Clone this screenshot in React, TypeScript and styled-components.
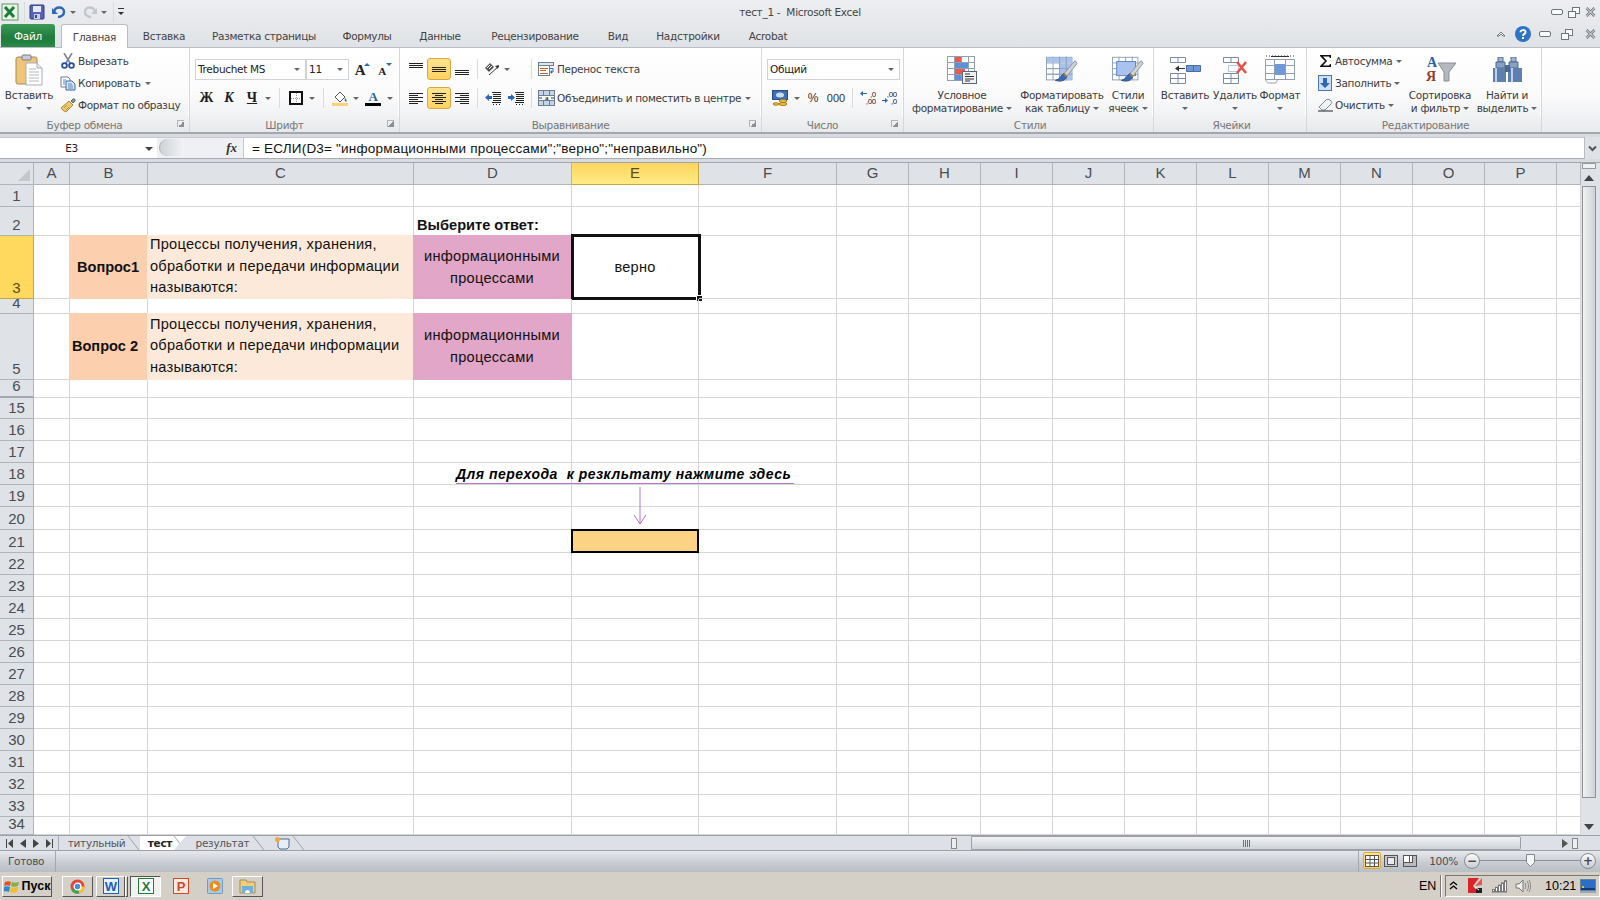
import React from "react";
import styled, { createGlobalStyle } from "styled-components";

const uiFont = `"DejaVu Sans", "Liberation Sans", sans-serif`;
const cellFont = `"Liberation Sans", Arial, sans-serif`;

const GlobalStyle = createGlobalStyle`
  html, body {
    margin: 0;
    padding: 0;
    width: 1600px;
    height: 900px;
    overflow: hidden;
    background: #e3e6ea;
  }
  svg { display: block; }
`;

const Window = styled.div`
  width: 1600px;
  height: 900px;
  display: flex;
  flex-direction: column;
  font-family: ${uiFont};
  font-size: 10.5px;
  letter-spacing: -0.3px;
  color: #3c3c3c;
`;

/* ---------- title bar ---------- */

const TitleBar = styled.div`
  height: 24px;
  display: grid;
  grid-template-columns: 1fr auto 1fr;
  align-items: center;
  background: linear-gradient(#eceef1, #e6e8eb);
`;

const Qat = styled.div`
  display: flex;
  align-items: center;
  padding-left: 1px;
`;

const Slot = styled.span<{ $w: number }>`
  width: ${(p) => p.$w}px;
  flex: none;
  display: flex;
  align-items: center;
  justify-content: center;
`;

const TitleText = styled.div`
  font-size: 10.5px;
  color: #444;
  white-space: pre;
`;

const WinButtons = styled.div`
  display: flex;
  justify-content: flex-end;
  align-items: center;
  gap: 5px;
  padding-right: 4px;
`;

/* ---------- tabs ---------- */

const TabStrip = styled.div`
  height: 23px;
  display: flex;
  align-items: flex-end;
  background: linear-gradient(#e6e8eb, #dfe2e6);
  padding-left: 1px;
  position: relative;
`;

const FileTab = styled.div`
  width: 54px;
  height: 23px;
  margin-right: 6px;
  border-radius: 3px 3px 0 0;
  background: linear-gradient(#3c9a58, #1f7b3c 60%, #2a8a47);
  color: #fff;
  display: flex;
  align-items: center;
  justify-content: center;
`;

const RibbonTab = styled.div<{ $w: number; $active?: boolean }>`
  width: ${(p) => p.$w}px;
  height: ${(p) => (p.$active ? 24 : 23)}px;
  flex: none;
  box-sizing: border-box;
  display: flex;
  align-items: center;
  justify-content: center;
  white-space: nowrap;
  color: #444;
  margin-bottom: ${(p) => (p.$active ? -1 : 0)}px;
  background: ${(p) => (p.$active ? "#fff" : "transparent")};
  border: ${(p) => (p.$active ? "1px solid #babec4" : "none")};
  border-bottom: none;
  border-radius: 3px 3px 0 0;
  position: relative;
  z-index: 1;
`;

const HelpCluster = styled.div`
  position: absolute;
  right: 2px;
  top: 2px;
  display: flex;
  align-items: center;
`;

/* ---------- ribbon ---------- */

const Ribbon = styled.div`
  height: 87px;
  box-sizing: border-box;
  display: flex;
  background: linear-gradient(#ffffff, #fbfbfc 55%, #e9ebee);
  border-top: 1px solid #babec4;
  border-bottom: 2px solid #a4a8ae;
`;

const Group = styled.div<{ $w: number }>`
  width: ${(p) => p.$w}px;
  flex: none;
  box-sizing: border-box;
  display: flex;
  flex-direction: column;
  border-right: 1px solid #d4d7db;
  box-shadow: inset -1px 0 0 #fff;
`;

const GroupBody = styled.div<{ $pl?: number; $column?: boolean; $pt?: number; $gap?: number }>`
  flex: 1;
  display: flex;
  flex-direction: ${(p) => (p.$column ? "column" : "row")};
  padding-left: ${(p) => p.$pl ?? 0}px;
  padding-top: ${(p) => p.$pt ?? 3}px;
  gap: ${(p) => p.$gap ?? 0}px;
`;

const GroupLabel = styled.div<{ $launcher?: boolean }>`
  height: 15px;
  flex: none;
  box-sizing: border-box;
  position: relative;
  display: flex;
  align-items: center;
  justify-content: center;
  color: #777;
  padding: ${(p) => (p.$launcher ? "0 20px 0 0" : "0 0 0 3px")};
  background: linear-gradient(#eff1f3, #e7e9ec);
`;

const Launcher = styled.span`
  position: absolute;
  right: 5px;
  top: 3px;
  width: 6px;
  height: 6px;
  border-left: 1px solid #b0b4b9;
  border-top: 1px solid #b0b4b9;
  background: linear-gradient(135deg, transparent 50%, #8b9097 50%);
`;

const LargeButton = styled.div<{ $w: number }>`
  width: ${(p) => p.$w}px;
  flex: none;
  display: flex;
  flex-direction: column;
  align-items: center;
`;

const LargeIcon = styled.div`
  height: 38px;
  display: flex;
  align-items: center;
  justify-content: center;
`;

const LargeText = styled.div`
  line-height: 13px;
  text-align: center;
  white-space: nowrap;
  display: flex;
  flex-direction: column;
  align-items: center;
`;

const TextLine = styled.span`
  display: flex;
  align-items: center;
  height: 13px;
  gap: 3px;
`;

const Caret = styled.i`
  display: inline-block;
  width: 0;
  height: 0;
  border-left: 3px solid transparent;
  border-right: 3px solid transparent;
  border-top: 3px solid #666;
`;

const SmallStack = styled.div<{ $w: number; $ml?: number }>`
  width: ${(p) => p.$w}px;
  margin-left: ${(p) => p.$ml ?? 0}px;
  margin-top: -1px;
  flex: none;
  display: flex;
  flex-direction: column;
`;

const SmallRow = styled.div`
  height: 22px;
  display: flex;
  align-items: center;
  white-space: nowrap;
`;

const Tools = styled.div`
  height: 22px;
  display: flex;
  align-items: center;
  white-space: nowrap;
`;

const Combo = styled.div<{ $w: number }>`
  width: ${(p) => p.$w}px;
  height: 21px;
  flex: none;
  box-sizing: border-box;
  border: 1px solid #d0d3d7;
  background: #fff;
  display: flex;
  align-items: center;
  justify-content: space-between;
  padding: 0 5px 0 2px;
  color: #222;
`;

const Hot = styled.span`
  width: 24px;
  height: 22px;
  flex: none;
  box-sizing: border-box;
  border: 1px solid #d9a73f;
  border-radius: 3px;
  background: linear-gradient(#ffe48f, #ffd263);
  display: flex;
  align-items: center;
  justify-content: center;
`;

const Sep = styled.span`
  width: 1px;
  height: 20px;
  background: #d9dbde;
`;

const Glyph = styled.span<{ $italic?: boolean; $underline?: boolean }>`
  font-family: "Liberation Serif", serif;
  font-weight: bold;
  font-size: 14px;
  letter-spacing: 0;
  color: #1c1c1c;
  font-style: ${(p) => (p.$italic ? "italic" : "normal")};
  text-decoration: ${(p) => (p.$underline ? "underline" : "none")};
`;

const NumGlyph = styled.span<{ $size: number }>`
  font-family: ${cellFont};
  font-size: ${(p) => p.$size}px;
  letter-spacing: 0;
  color: #333;
`;

/* ---------- formula bar ---------- */

const FormulaStrip = styled.div`
  height: 29px;
  box-sizing: border-box;
  background: #d8dbe0;
  padding: 3px 0;
  border-bottom: 1px solid #a2a6ac;
  display: flex;
`;

const NameBox = styled.div`
  width: 157px;
  flex: none;
  box-sizing: border-box;
  background: #fff;
  display: flex;
  align-items: center;
  position: relative;
  border-bottom: 1px solid #a9adb3;
  border-top: 1px solid #c6c9ce;
  justify-content: center;
  padding-right: 14px;
  color: #222;
`;

const NameCaret = styled.i`
  position: absolute;
  right: 4px;
  top: 9px;
  border-left: 4px solid transparent;
  border-right: 4px solid transparent;
  border-top: 4px solid #444;
`;

const FxZone = styled.div`
  width: 86px;
  flex: none;
  box-sizing: border-box;
  background: #eef0f3;
  border-bottom: 1px solid #a9adb3;
  border-top: 1px solid #c6c9ce;
  display: flex;
  align-items: center;
  justify-content: flex-end;
  padding-right: 6px;
  position: relative;
`;

const Grip = styled.span`
  position: absolute;
  left: 2px;
  top: 1px;
  width: 24px;
  height: 17px;
  border-radius: 10px 0 0 10px;
  background: linear-gradient(90deg, #cfd2d6, #f2f3f5);
  border-left: 1px solid #aeb1b6;
`;

const FxMark = styled.span`
  font-family: "Liberation Serif", serif;
  font-style: italic;
  font-weight: bold;
  font-size: 13px;
  letter-spacing: 0;
  color: #333;
`;

const FormulaInput = styled.div`
  flex: 1;
  box-sizing: border-box;
  background: #fff;
  border-left: 1px solid #c6c9ce;
  border-top: 1px solid #c6c9ce;
  border-bottom: 1px solid #a9adb3;
  padding-left: 8px;
  display: flex;
  align-items: center;
  font-family: ${cellFont};
  font-size: 13.5px;
  letter-spacing: 0.2px;
  color: #111;
  white-space: pre;
`;

const ExpandButton = styled.div`
  width: 15px;
  flex: none;
  background: #dfe2e6;
  border-left: 1px solid #b8bbc0;
  display: flex;
  align-items: center;
  justify-content: center;
`;

/* ---------- sheet ---------- */

const SheetRow = styled.div`
  height: 672px;
  display: flex;
`;

const SheetWrap = styled.div`
  position: relative;
  width: 1581px;
  flex: none;
  overflow: hidden;
  background: #fff;
`;

const Grid = styled.div<{ $cols: string; $rows: string }>`
  display: grid;
  grid-template-columns: ${(p) => p.$cols};
  grid-template-rows: ${(p) => p.$rows};
  font-family: ${cellFont};
  font-size: 14.6px;
  letter-spacing: 0.25px;
  color: #111;
`;

const Corner = styled.div`
  background: #dfe3e8;
  border-right: 1px solid #b1b5ba;
  border-bottom: 1px solid #b1b5ba;
  box-sizing: border-box;
  display: flex;
  align-items: flex-end;
  justify-content: flex-end;
  padding: 0 3px 3px 0;
`;

const CornerMark = styled.i`
  border-left: 12px solid transparent;
  border-bottom: 12px solid #c4c8cd;
`;

const ColHead = styled.div<{ $on?: boolean }>`
  box-sizing: border-box;
  display: flex;
  align-items: center;
  justify-content: center;
  padding-bottom: 2px;
  font-size: 15px;
  letter-spacing: 0;
  color: ${(p) => (p.$on ? "#5b4a1c" : "#4a4d52")};
  background: ${(p) => (p.$on ? "linear-gradient(#ffd55e, #ffeb85)" : "#dfe3e8")};
  border-right: 1px solid ${(p) => (p.$on ? "#c9a53f" : "#b1b5ba")};
  border-bottom: 1px solid ${(p) => (p.$on ? "#c9a53f" : "#b1b5ba")};
`;

const RowHead = styled.div<{ $on?: boolean; $hiddenNext?: boolean }>`
  box-sizing: border-box;
  display: flex;
  align-items: flex-end;
  justify-content: center;
  overflow: hidden;
  padding-bottom: 1px;
  line-height: 18px;
  font-size: 15px;
  letter-spacing: 0;
  color: ${(p) => (p.$on ? "#5b4a1c" : "#4a4d52")};
  background: ${(p) => (p.$on ? "#ffd95e" : "#dfe3e8")};
  border-right: 1px solid ${(p) => (p.$on ? "#c9a53f" : "#b1b5ba")};
  border-bottom: ${(p) => (p.$hiddenNext ? "2px solid #a4a8ae" : `1px solid ${p.$on ? "#c9a53f" : "#b1b5ba"}`)};
`;

const Cell = styled.div<{
  $fill?: string;
  $bold?: boolean;
  $center?: boolean;
  $bottom?: boolean;
  $boxed?: boolean;
  $pr?: number;
}>`
  box-sizing: border-box;
  position: relative;
  display: flex;
  flex-direction: column;
  justify-content: ${(p) => (p.$bottom ? "flex-end" : "center")};
  align-items: ${(p) => (p.$center ? "center" : "flex-start")};
  text-align: ${(p) => (p.$center ? "center" : "left")};
  padding: ${(p) => (p.$center ? 2 : 0)}px ${(p) => p.$pr ?? 0}px 0 ${(p) => (p.$center ? 0 : 3)}px;
  line-height: ${(p) => (p.$bottom ? 19 : 21.6)}px;
  white-space: nowrap;
  font-weight: ${(p) => (p.$bold ? "bold" : "normal")};
  letter-spacing: ${(p) => (p.$bold ? 0 : 0.25)}px;
  background: ${(p) => p.$fill ?? "transparent"};
  border-right: 1px solid ${(p) => (p.$fill ? "transparent" : "#d6d6d6")};
  border-bottom: 1px solid ${(p) => (p.$fill ? "transparent" : "#d6d6d6")};
  ${(p) => p.$fill && "margin: -1px 0 0 -1px;"}
  ${(p) => p.$boxed && "outline: 2px solid #000; outline-offset: -2px; z-index: 1;"}
`;

const SelectionFrame = styled.span`
  position: absolute;
  top: -2px;
  left: -1px;
  right: -3px;
  bottom: -2px;
  border: 3px solid #111;
  box-sizing: border-box;
  pointer-events: none;
`;

const FillHandle = styled.span`
  position: absolute;
  right: -5px;
  bottom: -4px;
  width: 7px;
  height: 7px;
  box-sizing: border-box;
  background: #111;
  border: 1px solid #fff;
`;

const FloatingNote = styled.div`
  position: absolute;
  left: 456px;
  top: 302px;
  width: 338px;
  height: 19px;
  box-sizing: border-box;
  border-bottom: 1px solid #b477cc;
  font-family: ${cellFont};
  font-weight: bold;
  font-style: italic;
  font-size: 14px;
  letter-spacing: 0.5px;
  color: #000;
  white-space: pre;
  line-height: 18px;
`;

const FloatingArrow = styled.svg`
  position: absolute;
  left: 633px;
  top: 324px;
`;

const VScroll = styled.div`
  flex: 1;
  display: flex;
  flex-direction: column;
  align-items: flex-start;
  background: #dfe3e8;
`;

const SplitBox = styled.div`
  width: 14px;
  height: 6px;
  margin: 0 0 0 1px;
  border: 1px solid #999;
  background: #f0f1f3;
  box-sizing: border-box;
`;

const VArrow = styled.div`
  width: 14px;
  height: 17px;
  margin-left: 1px;
  display: flex;
  align-items: center;
  justify-content: center;
`;

const VTrack = styled.div`
  flex: 1;
  width: 14px;
  margin-left: 1px;
`;

const VThumb = styled.div`
  height: 612px;
  box-sizing: border-box;
  border: 1px solid #8f9399;
  background: linear-gradient(90deg, #f1f3f5, #cdd1d7);
`;

/* ---------- sheet tabs ---------- */

const BottomBar = styled.div`
  height: 16px;
  box-sizing: border-box;
  display: flex;
  background: #dde1e7;
  border-top: 1px solid #9ca1a8;
  border-bottom: 1px solid #9ca1a8;
  align-items: stretch;
  overflow: hidden;
`;

const NavArrows = styled.div`
  width: 59px;
  flex: none;
  display: flex;
  align-items: center;
  border-right: 1px solid #a8acb2;
  padding-left: 2px;
  box-sizing: border-box;
`;

const SheetTab = styled.div<{ $w: number; $active?: boolean }>`
  width: ${(p) => p.$w}px;
  flex: none;
  position: relative;
  display: flex;
  align-items: center;
  justify-content: center;
  color: ${(p) => (p.$active ? "#222" : "#555")};
  font-weight: ${(p) => (p.$active ? "bold" : "normal")};
  background: ${(p) => (p.$active ? "#fff" : "transparent")};
  ${(p) => p.$active && "clip-path: polygon(0 0, 100% 0, calc(100% - 12px) 100%, 0 100%);"}
  padding-right: 6px;
  box-sizing: border-box;
  &::after {
    content: "";
    position: absolute;
    right: 6px;
    top: -2px;
    bottom: -2px;
    width: 1px;
    background: #a0a4aa;
    transform: skewX(38deg);
  }
`;

const TabSpacer = styled.div`
  flex: 1;
`;

const HScroll = styled.div`
  width: 630px;
  flex: none;
  display: flex;
  align-items: center;
`;

const SplitterBar = styled.span`
  width: 6px;
  height: 11px;
  margin: 0 4px 0 0;
  flex: none;
  border: 1px solid #888;
  background: #eceef0;
  box-sizing: border-box;
`;

const HThumb = styled.div`
  width: 550px;
  height: 14px;
  flex: none;
  margin-left: 10px;
  box-sizing: border-box;
  border: 1px solid #9da1a7;
  border-radius: 0 2px 2px 0;
  background: linear-gradient(#f0f2f4, #cfd3d9);
  display: flex;
  align-items: center;
  justify-content: center;
`;

const GripLines = styled.span`
  width: 7px;
  height: 7px;
  background: repeating-linear-gradient(90deg, #6d7176 0 1px, transparent 1px 2px);
`;

/* ---------- status bar ---------- */

const StatusBar = styled.div`
  height: 21px;
  flex: none;
  display: flex;
  align-items: center;
  justify-content: space-between;
  background: linear-gradient(#e6e8ec, #c9ccd2 55%, #b9bdc4);
  color: #4d4d4d;
`;

const StatusText = styled.div`
  width: 56px;
  height: 100%;
  box-sizing: border-box;
  padding: 0 0 2px 8px;
  display: flex;
  align-items: center;
  border-right: 1px solid #a5a9af;
`;

const StatusRight = styled.div`
  display: flex;
  align-items: center;
  height: 100%;
  width: 242px;
  box-sizing: border-box;
  border-left: 1px solid #a5a9af;
  padding: 0 0 2px 4px;
`;

const ViewBtn = styled.span<{ $on?: boolean }>`
  width: 18px;
  height: 17px;
  flex: none;
  box-sizing: border-box;
  display: flex;
  align-items: center;
  justify-content: center;
  border-radius: 2px;
  margin-right: 1px;
  ${(p) => p.$on && "background: linear-gradient(#ffe48f, #ffd263); border: 1px solid #d9a73f;"}
`;

const Zoom = styled.span`
  width: 38px;
  text-align: right;
  margin-right: 6px;
  flex: none;
`;

const ZoomCircle = styled.span`
  width: 16px;
  height: 16px;
  flex: none;
  box-sizing: border-box;
  border: 1px solid #888c92;
  border-radius: 50%;
  background: linear-gradient(#fbfbfc, #c8ccd1);
  display: flex;
  align-items: center;
  justify-content: center;
  color: #444;
  font-weight: bold;
  font-size: 12px;
  line-height: 1;
`;

const SliderTrack = styled.span`
  width: 100px;
  height: 1px;
  flex: none;
  background: #8e9298;
  position: relative;
`;

const SliderThumb = styled.span`
  position: absolute;
  left: 46px;
  top: -6px;
`;

/* ---------- taskbar ---------- */

const Taskbar = styled.div`
  flex: 1;
  display: flex;
  align-items: center;
  background: #d4d0c8;
  color: #000;
  font-family: "Liberation Sans", sans-serif;
  font-size: 13px;
  letter-spacing: 0;
  padding-left: 2px;
`;

const TaskButton = styled.div<{ $w: number; $ml?: number; $pressed?: boolean; $flat?: boolean }>`
  width: ${(p) => p.$w}px;
  height: 21px;
  margin-left: ${(p) => p.$ml ?? 0}px;
  flex: none;
  box-sizing: border-box;
  display: flex;
  align-items: center;
  justify-content: center;
  gap: 2px;
  ${(p) =>
    p.$flat
      ? ""
      : p.$pressed
      ? "background: #f4f2ee; border: 1px solid; border-color: #555 #fff #fff #555;"
      : "border: 1px solid; border-color: #fff #555 #555 #fff;"}
`;

const StartLabel = styled.span`
  font-weight: bold;
  font-size: 12.5px;
`;

const TaskSpacer = styled.div`
  flex: 1;
`;

const LangLabel = styled.div`
  width: 21px;
  flex: none;
  font-size: 12.5px;
`;

const TaskDivider = styled.span`
  width: 0;
  height: 22px;
  margin: 0 3px 0 0;
  border-left: 1px solid #777;
  border-right: 1px solid #fff;
`;

const Tray = styled.div`
  width: 155px;
  height: 22px;
  flex: none;
  box-sizing: border-box;
  display: flex;
  align-items: center;
  border: 1px solid;
  border-color: #777 #fff #fff #777;
`;

const Clock = styled.span`
  font-size: 12.5px;
  width: 33px;
  margin-left: 7px;
  flex: none;
`;

/* ---------- icons ---------- */

const ExcelLogo = () => (
  <svg width="18" height="18" viewBox="0 0 18 18">
    <rect x="1" y="1" width="16" height="16" fill="#eaf3e6" stroke="#5f9a68" />
    <path d="M4 4l9 10M13 4L4 14" stroke="#1f7b3c" strokeWidth="3" />
  </svg>
);

const SaveIcon = () => (
  <svg width="16" height="16" viewBox="0 0 16 16">
    <rect x="1" y="1" width="14" height="14" rx="1" fill="#5a62b8" stroke="#2f3a86" />
    <rect x="4" y="2" width="8" height="6" fill="#e6ecf6" />
    <rect x="5" y="10" width="6" height="5" fill="#ccd0dc" />
    <rect x="6" y="11" width="2" height="3" fill="#3a438f" />
  </svg>
);

const UndoIcon = ({ c }: { c: string }) => (
  <svg width="14" height="14" viewBox="0 0 14 14">
    <path d="M2 7 C3 1 12 1 12 7 C12 10 9 12 6 12" fill="none" stroke={c} strokeWidth="2.4" />
    <path d="M0 3v6h6z" fill={c} />
  </svg>
);

const RedoIcon = ({ c }: { c: string }) => (
  <svg width="14" height="14" viewBox="0 0 14 14">
    <path d="M12 7 C11 1 2 1 2 7 C2 10 5 12 8 12" fill="none" stroke={c} strokeWidth="2.4" />
    <path d="M14 3v6H8z" fill={c} />
  </svg>
);

const CustomizeIcon = () => (
  <svg width="8" height="10" viewBox="0 0 8 10">
    <rect x="1" y="1" width="6" height="1" fill="#333" />
    <path d="M1 5h6L4 8z" fill="#333" />
  </svg>
);

const MinGlyph = () => (
  <svg width="12" height="7" viewBox="0 0 12 7">
    <rect x="0.5" y="0.5" width="11" height="5" rx="1.5" fill="#fafbfc" stroke="#70757c" />
  </svg>
);

const RestoreGlyph = () => (
  <svg width="12" height="11" viewBox="0 0 12 11">
    <rect x="4.5" y="0.5" width="7" height="6" fill="#fafbfc" stroke="#70757c" />
    <rect x="0.5" y="4.5" width="7" height="6" fill="#fafbfc" stroke="#70757c" />
  </svg>
);

const CloseGlyph = () => (
  <svg width="11" height="10" viewBox="0 0 11 10">
    <path d="M1.5 1l8 8M9.5 1l-8 8" stroke="#70757c" strokeWidth="2.6" />
    <path d="M1.5 1l8 8M9.5 1l-8 8" stroke="#f3f4f6" strokeWidth="1" />
  </svg>
);

const HelpIcon = () => (
  <svg width="16" height="16" viewBox="0 0 16 16">
    <circle cx="8" cy="8" r="8" fill="#2f73c7" />
    <path d="M5.5 6.2C5.6 3.4 10.6 3.4 10.6 6c0 2-2.6 1.8-2.6 4" fill="none" stroke="#fff" strokeWidth="1.9" />
    <rect x="7" y="11" width="2" height="2" fill="#fff" />
  </svg>
);

const ChevronUp = () => (
  <svg width="10" height="8" viewBox="0 0 10 8">
    <path d="M1 6l4-4 4 4H7L5 4 3 6z" fill="#fff" stroke="#555" strokeWidth="0.8" />
  </svg>
);

const ChevronDown = () => (
  <svg width="9" height="7" viewBox="0 0 9 7">
    <path d="M1 1.5l3.5 3.5L8 1.5" fill="none" stroke="#555" strokeWidth="2" />
  </svg>
);

const PasteIcon = () => (
  <svg width="28" height="32" viewBox="0 0 28 32">
    <rect x="1" y="3" width="21" height="27" rx="2" fill="#efc579" stroke="#a98a58" />
    <rect x="7" y="1" width="9" height="5" rx="1" fill="#c9cdd2" stroke="#7a7f86" />
    <path d="M11 9h11l5 5v17H11z" fill="#fff" stroke="#a9adb3" />
    <path d="M22 9v5h5" fill="#e6e9ed" stroke="#a9adb3" />
    <path d="M14 15h7M14 18h10M14 21h10M14 24h10M14 27h10" stroke="#b3b8c0" />
  </svg>
);

const CutIcon = () => (
  <svg width="14" height="16" viewBox="0 0 14 16">
    <path d="M3 0l6 10M11 0L5 10" stroke="#7d8693" strokeWidth="1.6" />
    <circle cx="3.5" cy="12.5" r="2.4" fill="none" stroke="#27509b" strokeWidth="1.8" />
    <circle cx="10.5" cy="12.5" r="2.4" fill="none" stroke="#27509b" strokeWidth="1.8" />
  </svg>
);

const CopyIcon = () => (
  <svg width="16" height="15" viewBox="0 0 16 15">
    <path d="M1 1h7l2 2v8H1z" fill="#fff" stroke="#6c7d96" />
    <path d="M6 5h6l3 3v6H6z" fill="#dce8f8" stroke="#3566b0" />
    <path d="M8 8h4M8 10h5M8 12h5M3 4h3M3 6h2M3 8h2" stroke="#3566b0" strokeWidth="0.8" />
  </svg>
);

const BrushIcon = () => (
  <svg width="17" height="16" viewBox="0 0 17 16">
    <path d="M1 11 L9 4 L13 8 L6 15 C4 14 2 13 1 11z" fill="#eec768" stroke="#a78a3d" />
    <path d="M4 11l3-3M6 13l3-3" stroke="#b39445" />
    <path d="M11 4l2-2c1-1 3 1 2 2l-2 2z" fill="#8b94a0" stroke="#5e6670" />
  </svg>
);

const GrowFontIcon = ({ big }: { big?: boolean }) => (
  <svg width="18" height="19" viewBox="0 0 18 19">
    <text x="7" y="15" fontSize={big ? 15 : 11} fontWeight="bold" textAnchor="middle" fill="#222" fontFamily="Liberation Serif">A</text>
    <path d={big ? "M11 6l3-3 3 3z" : "M11 3h6l-3 3z"} fill="#2f66b5" />
  </svg>
);

const WrapIcon = () => (
  <svg width="17" height="15" viewBox="0 0 17 15">
    <rect x="0.5" y="0.5" width="15" height="3" fill="#dfe6ef" stroke="#6f7d90" />
    <rect x="0.5" y="3.5" width="11" height="10" fill="#fff" stroke="#6f7d90" />
    <path d="M2 6.5h8M2 8.5h6M2 11.5h8" stroke="#b5651d" />
    <path d="M12 6.5h3v3.5h-2" fill="none" stroke="#2f66b5" />
    <path d="M14 8v4l-2-2z" fill="#2f66b5" />
  </svg>
);

const MergeIcon = () => (
  <svg width="17" height="16" viewBox="0 0 17 16">
    <rect x="0.5" y="0.5" width="16" height="15" fill="#c5d4e6" stroke="#6f7d90" />
    <rect x="0.5" y="5.5" width="16" height="5" fill="#fff" stroke="#6f7d90" />
    <path d="M1 8h3M13 8h3" stroke="#333" />
    <text x="8.5" y="10" fontSize="7" fontWeight="bold" textAnchor="middle" fill="#333" fontFamily="Liberation Serif">a</text>
    <path d="M5.5 0v5M11.5 0v5M5.5 11v5M11.5 11v5" stroke="#6f7d90" />
  </svg>
);

const AlignLines = ({ rows }: { rows: number[][] }) => (
  <svg width="15" height="13" viewBox="0 0 15 13">
    {rows.map(([a, b, y]) => (
      <rect key={y} x={a} y={y} width={b - a} height="1" fill="#222" />
    ))}
  </svg>
);

const vTop = [[0, 14, 0], [0, 14, 2], [0, 14, 4]];
const vMid = [[0, 14, 4], [0, 14, 6], [0, 14, 8]];
const vBot = [[0, 14, 7], [0, 14, 9], [0, 14, 11]];
const hLeft = [[0, 14, 1], [0, 9, 3], [0, 14, 5], [0, 9, 7], [0, 14, 9], [0, 9, 11]];
const hMid = [[0, 14, 1], [3, 11, 3], [0, 14, 5], [3, 11, 7], [0, 14, 9], [3, 11, 11]];
const hRight = [[0, 14, 1], [5, 14, 3], [0, 14, 5], [5, 14, 7], [0, 14, 9], [5, 14, 11]];

const OrientIcon = () => (
  <svg width="16" height="14" viewBox="0 0 16 14">
    <path d="M1 6l5-5 4 4-5 5z" fill="#555" />
    <path d="M3 6l3-3M5 7l3-3" stroke="#fff" />
    <path d="M5 13L15 4" stroke="#333" />
    <path d="M15 3l-4 1 3 3z" fill="#333" />
  </svg>
);

const IndentIcon = ({ flip }: { flip?: boolean }) => (
  <svg width="16" height="13" viewBox="0 0 16 13">
    <path d="M7 0.5h9M8 2.5h8M8 4.5h8M8 6.5h8M8 8.5h8M7 10.5h9" stroke="#222" />
    <path d="M8 12.5h1M11 12.5h1M14 12.5h1" stroke="#222" />
    <path d={flip ? "M0 4h3V2l4 3.5L3 9V7H0z" : "M7 4H4V2L0 5.5 4 9V7h3z"} fill="#2f66b5" />
  </svg>
);

const CurrencyIcon = () => (
  <svg width="16" height="16" viewBox="0 0 16 16">
    <rect x="0.5" y="0.5" width="15" height="9" fill="#3f6fb8" stroke="#2a4d88" />
    <ellipse cx="8" cy="5" rx="4" ry="2.5" fill="#cbdcf0" />
    <ellipse cx="11" cy="11" rx="4" ry="1.5" fill="#f1c041" stroke="#a67f1d" />
    <ellipse cx="11" cy="14" rx="4" ry="1.5" fill="#f1c041" stroke="#a67f1d" />
    <ellipse cx="4" cy="14" rx="3" ry="1.2" fill="#f1c041" stroke="#a67f1d" />
  </svg>
);

const DecimalIcon = ({ dec }: { dec?: boolean }) => (
  <svg width="16" height="16" viewBox="0 0 16 16">
    <text x="16" y="7" fontSize="8" textAnchor="end" fill="#222" fontFamily="Liberation Sans">{dec ? ",00" : ",0"}</text>
    <text x="16" y="14" fontSize="8" textAnchor="end" fill="#222" fontFamily="Liberation Sans">{dec ? ",0" : ",00"}</text>
    <path d={dec ? "M1 10h3V8l3 2.5L4 13v-2H1z" : "M7 3H3V1L0 3.5 3 6V4h4z"} fill="#2f66b5" />
  </svg>
);

const TableBase = () => (
  <>
    <rect x="0.5" y="0.5" width="27" height="24" fill="#fff" stroke="#8fa0b5" />
    <path d="M7.5 0v25M14.5 0v25M21.5 0v25M0 6.5h28M0 12.5h28M0 18.5h28" stroke="#8fa0b5" />
  </>
);

const CondFormatIcon = () => (
  <svg width="30" height="28" viewBox="0 0 30 28">
    <TableBase />
    <rect x="8" y="1" width="6" height="5" fill="#f0584a" />
    <rect x="8" y="7" width="13" height="5" fill="#5f8fd8" />
    <rect x="8" y="13" width="10" height="5" fill="#f0584a" />
    <rect x="8" y="19" width="6" height="5" fill="#5f8fd8" />
    <rect x="15.5" y="15.5" width="14" height="12" fill="#eef1f5" stroke="#5c6672" />
    <path d="M18 18h5M18 20.5h9M18 23h9M18 25h5" stroke="#333" />
  </svg>
);

const BrushOver = () => (
  <>
    <path d="M31 4L19 18l3 3L33 7z" fill="#cfd3d9" stroke="#8d9299" />
    <path d="M19 18c-3 1-3 5-9 7 6 2 11 0 12-4z" fill="#3a69b8" stroke="#2a4a80" />
    <path d="M19 18l3 3" stroke="#a07d3a" strokeWidth="2" />
  </>
);

const FormatTableIcon = () => (
  <svg width="32" height="28" viewBox="0 0 34 28">
    <TableBase />
    <rect x="1" y="1" width="27" height="5" fill="#a9c3ee" />
    <rect x="15" y="7" width="13" height="17" fill="#a9c3ee" />
    <path d="M14.5 0v25M21.5 0v25M0 12.5h28M0 18.5h28" stroke="#8fa0b5" />
    <BrushOver />
  </svg>
);

const CellStylesIcon = () => (
  <svg width="32" height="28" viewBox="0 0 34 28">
    <TableBase />
    <rect x="5" y="5" width="20" height="15" fill="#a9c3ee" stroke="#5f82c0" />
    <BrushOver />
  </svg>
);

const InsertCellsIcon = () => (
  <svg width="31" height="27" viewBox="0 0 31 27">
    <path d="M0.5 0.5h15v5h-15zM8 0v6" fill="#fff" stroke="#7a8ca3" />
    <path d="M16.5 8.5h14v6h-14zM23.5 8v6" fill="#6f98d8" stroke="#4c6c9f" />
    <path d="M6 11.5h9" stroke="#333" />
    <path d="M9 8.5v6L5 11.5z" fill="#333" />
    <path d="M0.5 16.5h15v10h-15zM8 16v11M0 21.5h16" fill="#fff" stroke="#7a8ca3" />
  </svg>
);

const DeleteCellsIcon = () => (
  <svg width="25" height="27" viewBox="0 0 25 27">
    <path d="M0.5 0.5h15v5h-15zM8 0v6" fill="#fff" stroke="#7a8ca3" />
    <path d="M5.5 8.5h10v6h-10z" fill="#fff" stroke="#6f98d8" strokeDasharray="1 1" />
    <path d="M14 5l9 11M23 5l-9 11" stroke="#ee4a3c" strokeWidth="2.4" />
    <path d="M0.5 16.5h15v10h-15zM8 16v11M0 21.5h16" fill="#fff" stroke="#7a8ca3" />
  </svg>
);

const FormatCellsIcon = () => (
  <svg width="30" height="30" viewBox="0 0 30 30">
    <path d="M1 1h28" stroke="#333" strokeDasharray="1 2" />
    <path d="M6 1.5h18" stroke="#333" />
    <rect x="0.5" y="4.5" width="29" height="20" fill="#fff" stroke="#8fa0b5" />
    <path d="M9.5 4v21M20.5 4v21M0 10.5h30M0 18.5h30" stroke="#8fa0b5" />
    <rect x="10" y="9" width="10" height="11" fill="#6f98d8" />
    <path d="M1 25c0 3 3 3 4 3h5c2 0 2-3 2-3" fill="#fff" stroke="#8fa0b5" />
  </svg>
);

const SigmaIcon = () => (
  <svg width="13" height="12" viewBox="0 0 13 12">
    <path d="M1 0h11v3h-1L10 1.5H4L8 6l-4 4.5h6L11 9h1v3H1V11l5-5-5-5z" fill="#111" />
  </svg>
);

const FillIcon = () => (
  <svg width="14" height="16" viewBox="0 0 14 16">
    <rect x="0.5" y="0.5" width="13" height="15" fill="#cfe0f6" stroke="#4b76b5" />
    <path d="M5 3h4v5h3l-5 5-5-5h3z" fill="#2f66b5" />
  </svg>
);

const EraserIcon = () => (
  <svg width="15" height="14" viewBox="0 0 15 14">
    <path d="M1 9l7-7c1-1 3-1 4 0l1 1c1 1 1 2 0 3l-6 6H4z" fill="#f1f3f6" stroke="#7f8a98" />
    <path d="M0 13h15" stroke="#222" />
  </svg>
);

const SortIcon = () => (
  <svg width="32" height="32" viewBox="0 0 32 32">
    <path d="M14 9h18L25 18v9h-5v-9z" fill="#b5b9bf" stroke="#8b8f95" />
    <text x="8" y="13" fontSize="14" fontWeight="bold" textAnchor="middle" fill="#2c5ea8" fontFamily="Liberation Serif">A</text>
    <text x="7" y="27" fontSize="14" fontWeight="bold" textAnchor="middle" fill="#963a32" fontFamily="Liberation Serif">Я</text>
  </svg>
);

const FindIcon = () => (
  <svg width="29" height="27" viewBox="0 0 29 27">
    <path d="M5 0h5v5H5zM18 0h5v5h-5z" fill="#9eb3d0" stroke="#566f96" />
    <path d="M3 5h9v6H3zM16 5h9v6h-9z" fill="#87a1c6" stroke="#4f688f" />
    <path d="M0 11h13v14H0zM15 11h14v14H15z" fill="#5e7fb0" />
    <path d="M3 11v14M19 11v14" stroke="#bfd0e8" strokeWidth="2" />
    <rect x="12" y="8" width="5" height="7" fill="#4f688f" />
  </svg>
);

const TriLeft = ({ c = "#444" }: { c?: string }) => (
  <svg width="6" height="9" viewBox="0 0 6 9"><path d="M6 0v9L0 4.5z" fill={c} /></svg>
);
const TriRight = ({ c = "#444" }: { c?: string }) => (
  <svg width="6" height="9" viewBox="0 0 6 9"><path d="M0 0v9l6-4.5z" fill={c} /></svg>
);
const FirstIcon = () => (
  <svg width="7" height="9" viewBox="0 0 7 9"><path d="M7 0v9L2 4.5zM0 0h1v9H0z" fill="#444" /></svg>
);
const LastIcon = () => (
  <svg width="7" height="9" viewBox="0 0 7 9"><path d="M0 0v9l5-4.5zM6 0h1v9H6z" fill="#444" /></svg>
);

const NewSheetIcon = () => (
  <svg width="16" height="14" viewBox="0 0 16 14">
    <path d="M4 3h11v8l-2 2H6l-2-2z" fill="#e9eef6" stroke="#4f688f" />
    <circle cx="3.5" cy="3.5" r="2.5" fill="#f3a93a" />
  </svg>
);

const NormalViewIcon = () => (
  <svg width="14" height="12" viewBox="0 0 14 12">
    <rect x="0.5" y="0.5" width="13" height="11" fill="#fff" stroke="#555" />
    <path d="M5 0v12M9.5 0v12M0 4.5h14M0 8h14" stroke="#555" />
  </svg>
);
const LayoutViewIcon = () => (
  <svg width="14" height="12" viewBox="0 0 14 12">
    <rect x="0.5" y="0.5" width="13" height="11" fill="#c5c8cd" stroke="#555" />
    <rect x="3.5" y="2.5" width="7" height="7" fill="#e8eaed" stroke="#555" />
  </svg>
);
const PageViewIcon = () => (
  <svg width="14" height="12" viewBox="0 0 14 12">
    <rect x="0.5" y="0.5" width="13" height="11" fill="#b8bbc1" stroke="#555" />
    <rect x="0.5" y="0.5" width="6" height="7" fill="#fff" stroke="#555" />
    <rect x="6.5" y="0.5" width="3" height="7" fill="#fff" stroke="#555" />
  </svg>
);
const ThumbIcon = () => (
  <svg width="9" height="13" viewBox="0 0 9 13">
    <path d="M0.5 0.5h8v8l-4 4-4-4z" fill="#f5f6f8" stroke="#83878d" />
  </svg>
);

const WinFlag = () => (
  <svg width="16" height="15" viewBox="0 0 16 15">
    <path d="M1 3c2-1 4-1 6 0l-1 4C4 6 2 6 0 7z" fill="#e2512a" />
    <path d="M8 3c2 1 4 1 7 0l-1 4c-3 1-5 1-7 0z" fill="#7cb342" />
    <path d="M0 8c2-1 4-1 6 0l-1 5c-2-1-4-1-6 0z" fill="#2f86d1" />
    <path d="M7 8c2 1 4 1 7 0l-1 5c-3 1-5 1-7 0z" fill="#f5bb2a" />
  </svg>
);

const ChromeIcon = () => (
  <svg width="15" height="15" viewBox="0 0 16 16">
    <circle cx="8" cy="8" r="7.5" fill="#e04a3a" />
    <path d="M8 8L1.5 12A7.5 7.5 0 0 0 10 15.3z" fill="#3aa757" />
    <path d="M8 8h7.4A7.5 7.5 0 0 1 10 15.3z" fill="#f7c531" />
    <circle cx="8" cy="8" r="3.6" fill="#4a89dc" stroke="#fff" strokeWidth="1.4" />
  </svg>
);

const OfficeTile = ({ letter, fg, bg }: { letter: string; fg: string; bg: string }) => (
  <svg width="16" height="16" viewBox="0 0 16 16">
    <rect x="0.5" y="0.5" width="15" height="15" fill={bg} stroke={fg} />
    <text x="8" y="13" fontSize="13" fontWeight="bold" textAnchor="middle" fill={fg} fontFamily="Liberation Sans">{letter}</text>
  </svg>
);

const MediaIcon = () => (
  <svg width="16" height="16" viewBox="0 0 16 16">
    <rect x="0.5" y="0.5" width="15" height="15" rx="1" fill="#a6cbe8" stroke="#6d9cc4" />
    <circle cx="8" cy="8" r="5.5" fill="#f08a1d" />
    <path d="M6 5l5 3-5 3z" fill="#fff" />
  </svg>
);

const FolderIcon = () => (
  <svg width="17" height="16" viewBox="0 0 17 16">
    <path d="M1 2h6l1 2h8v11H1z" fill="#efcf7b" stroke="#a58d4d" />
    <path d="M3 8h11v7H3z" fill="#6fb1dd" />
    <path d="M6 15c0-4 5-4 5 0" fill="#fff" />
  </svg>
);

const ChevronsTray = () => (
  <svg width="9" height="10" viewBox="0 0 9 10">
    <path d="M1 4l3.5-3L8 4M1 8l3.5-3L8 8" fill="none" stroke="#000" strokeWidth="1.3" />
  </svg>
);

const KasperskyIcon = () => (
  <svg width="16" height="16" viewBox="0 0 16 16">
    <path d="M1 0h11L6 8l6 7H1z" fill="#d8232a" />
    <path d="M8 8l7-8v7z" fill="#e9545a" />
    <path d="M9 10h6v5H9z" fill="#222" />
    <path d="M8 9l4 3" stroke="#fff" />
  </svg>
);

const SignalIcon = () => (
  <svg width="16" height="13" viewBox="0 0 16 13">
    {[0, 1, 2, 3, 4].map((i) => (
      <rect key={i} x={i * 3 + 0.5} y={9.5 - i * 2.2} width="2" height={2.5 + i * 2.2} fill="#fff" stroke="#777" />
    ))}
  </svg>
);

const SpeakerIcon = () => (
  <svg width="17" height="14" viewBox="0 0 17 14">
    <path d="M1 5h3l4-4v12L4 9H1z" fill="#f0f0ee" stroke="#777" />
    <path d="M10 4c1 2 1 4 0 6M12 2c2 3 2 7 0 10M14 1c2 4 2 8 0 12" fill="none" stroke="#8a8a8a" />
  </svg>
);

const DesktopIcon = () => (
  <svg width="16" height="14" viewBox="0 0 16 14">
    <rect x="0.5" y="0.5" width="15" height="11" fill="#2a6fc4" stroke="#68829e" />
    <rect x="1" y="9" width="14" height="2" fill="#123c78" />
    <rect x="2" y="7" width="2" height="2" fill="#e8b64a" />
    <rect x="0" y="12" width="16" height="2" fill="#9ba7b5" />
  </svg>
);

/* ---------- data ---------- */

const colWidths = [36, 78, 266, 158, 127, 138, 72, 72, 72, 72, 72, 72, 72, 72, 72, 72, 24];
const colNames = ["A", "B", "C", "D", "E", "F", "G", "H", "I", "J", "K", "L", "M", "N", "O", "P", ""];

const rowDefs: [number, number][] = [
  [1, 22], [2, 29], [3, 63], [4, 15], [5, 66], [6, 18],
  [15, 21], [16, 22], [17, 22], [18, 22], [19, 22], [20, 23], [21, 23], [22, 22],
  [23, 22], [24, 22], [25, 22], [26, 22], [27, 22], [28, 22], [29, 22], [30, 22],
  [31, 22], [32, 22], [33, 22], [34, 18],
];

const peach = "#fcd0ae";
const cream = "#fde9d9";
const pink = "#e1a6c8";

const question = ["Процессы получения, хранения,", "обработки и передачи информации", "называются:"];
const answer = ["информационными", "процессами"];

const Lines = ({ items }: { items: string[] }) => (
  <>
    {items.map((t) => (
      <span key={t}>{t}</span>
    ))}
  </>
);

const renderCell = (col: string, row: number) => {
  const key = `${col}-${row}`;
  const id = `${col}${row}`;
  switch (id) {
    case "B3":
      return <Cell key={key} $fill={peach} $bold $center>Вопрос1</Cell>;
    case "B5":
      return <Cell key={key} $fill={peach} $bold $center $pr={6}>Вопрос 2</Cell>;
    case "C3":
    case "C5":
      return <Cell key={key} $fill={cream}><Lines items={question} /></Cell>;
    case "D3":
    case "D5":
      return <Cell key={key} $fill={pink} $center><Lines items={answer} /></Cell>;
    case "D2":
      return <Cell key={key} $bold $bottom>Выберите ответ:</Cell>;
    case "E3":
      return (
        <Cell key={key} $center>
          верно
          <SelectionFrame />
          <FillHandle />
        </Cell>
      );
    case "E21":
      return <Cell key={key} $fill="#fcd284" $boxed />;
    default:
      return <Cell key={key} />;
  }
};

const App = () => {
  const gridCols = ["34px", ...colWidths.map((w) => `${w}px`)].join(" ");
  const gridRows = ["22px", ...rowDefs.map(([, h]) => `${h}px`)].join(" ");

  return (
    <Window>
      <GlobalStyle />

      <TitleBar>
        <Qat>
          <ExcelLogo />
          <Slot $w={10}><Sep /></Slot>
          <SaveIcon />
          <Slot $w={7} />
          <UndoIcon c="#2f66b5" />
          <Slot $w={14}><Caret /></Slot>
          <Slot $w={3} />
          <RedoIcon c="#c3c7cc" />
          <Slot $w={14}><Caret /></Slot>
          <Slot $w={5}><Sep /></Slot>
          <Slot $w={10}><CustomizeIcon /></Slot>
        </Qat>
        <TitleText>тест_1 -  Microsoft Excel</TitleText>
        <WinButtons>
          <MinGlyph />
          <RestoreGlyph />
          <CloseGlyph />
        </WinButtons>
      </TitleBar>

      <TabStrip>
        <FileTab>Файл</FileTab>
        <RibbonTab $w={67} $active>Главная</RibbonTab>
        <RibbonTab $w={72}>Вставка</RibbonTab>
        <RibbonTab $w={128}>Разметка страницы</RibbonTab>
        <RibbonTab $w={78}>Формулы</RibbonTab>
        <RibbonTab $w={68}>Данные</RibbonTab>
        <RibbonTab $w={122}>Рецензирование</RibbonTab>
        <RibbonTab $w={44}>Вид</RibbonTab>
        <RibbonTab $w={96}>Надстройки</RibbonTab>
        <RibbonTab $w={64}>Acrobat</RibbonTab>
        <HelpCluster>
          <Slot $w={14}><ChevronUp /></Slot>
          <Slot $w={30}><HelpIcon /></Slot>
          <Slot $w={14}><MinGlyph /></Slot>
          <Slot $w={30}><RestoreGlyph /></Slot>
          <Slot $w={16}><CloseGlyph /></Slot>
        </HelpCluster>
      </TabStrip>

      <Ribbon>
        <Group $w={190}>
          <GroupBody>
            <LargeButton $w={58}>
              <LargeIcon><PasteIcon /></LargeIcon>
              <LargeText>
                <TextLine>Вставить</TextLine>
                <TextLine><Caret /></TextLine>
              </LargeText>
            </LargeButton>
            <SmallStack $w={130}>
              <SmallRow><Slot $w={20}><CutIcon /></Slot>Вырезать</SmallRow>
              <SmallRow><Slot $w={20}><CopyIcon /></Slot>Копировать<Slot $w={14}><Caret /></Slot></SmallRow>
              <SmallRow><Slot $w={20}><BrushIcon /></Slot>Формат по образцу</SmallRow>
            </SmallStack>
          </GroupBody>
          <GroupLabel $launcher>Буфер обмена<Launcher /></GroupLabel>
        </Group>

        <Group $w={210}>
          <GroupBody $column $pl={5} $pt={10} $gap={7}>
            <Tools>
              <Combo $w={111}>Trebuchet MS<Caret /></Combo>
              <Combo $w={43}>11<Caret /></Combo>
              <Slot $w={26}><GrowFontIcon big /></Slot>
              <Slot $w={18}><GrowFontIcon /></Slot>
            </Tools>
            <Tools>
              <Slot $w={23}><Glyph>Ж</Glyph></Slot>
              <Slot $w={22}><Glyph $italic>К</Glyph></Slot>
              <Slot $w={24}><Glyph $underline>Ч</Glyph></Slot>
              <Slot $w={8}><Caret /></Slot>
              <Slot $w={14}><Sep /></Slot>
              <Slot $w={20}>
                <svg width="14" height="14" viewBox="0 0 14 14">
                  <rect x="1" y="1" width="12" height="12" fill="#fff" stroke="#111" strokeWidth="2" />
                  <path d="M7.5 2v10M2 7.5h10" stroke="#999" strokeDasharray="1 1" />
                </svg>
              </Slot>
              <Slot $w={12}><Caret /></Slot>
              <Slot $w={10}><Sep /></Slot>
              <Slot $w={24}>
                <svg width="16" height="16" viewBox="0 0 16 16">
                  <path d="M3 7l5-5 5 5-5 5z" fill="#fff" stroke="#555" />
                  <path d="M13 8c2 2 2 3 1 4-1-1-2-2-1-4z" fill="#2f66b5" />
                  <rect x="0" y="13" width="16" height="3" fill="#fdd27a" />
                </svg>
              </Slot>
              <Slot $w={8}><Caret /></Slot>
              <Slot $w={26}>
                <svg width="16" height="16" viewBox="0 0 16 16">
                  <text x="8" y="11" fontSize="13" fontWeight="bold" textAnchor="middle" fill="#2c5ea8" fontFamily="Liberation Serif">A</text>
                  <rect x="0" y="13" width="16" height="3" fill="#000" />
                </svg>
              </Slot>
              <Slot $w={8}><Caret /></Slot>
            </Tools>
          </GroupBody>
          <GroupLabel $launcher>Шрифт<Launcher /></GroupLabel>
        </Group>

        <Group $w={362}>
          <GroupBody $column $pl={5} $pt={10} $gap={7}>
            <Tools>
              <Slot $w={22}><AlignLines rows={vTop} /></Slot>
              <Hot><AlignLines rows={vMid} /></Hot>
              <Slot $w={22}><AlignLines rows={vBot} /></Slot>
              <Slot $w={8}><Sep /></Slot>
              <Slot $w={22}><OrientIcon /></Slot>
              <Slot $w={8}><Caret /></Slot>
              <Slot $w={16} />
              <Slot $w={8}><Sep /></Slot>
              <Slot $w={22}><WrapIcon /></Slot>
              <span>Перенос текста</span>
            </Tools>
            <Tools>
              <Slot $w={22}><AlignLines rows={hLeft} /></Slot>
              <Hot><AlignLines rows={hMid} /></Hot>
              <Slot $w={22}><AlignLines rows={hRight} /></Slot>
              <Slot $w={8}><Sep /></Slot>
              <Slot $w={23}><IndentIcon /></Slot>
              <Slot $w={23}><IndentIcon flip /></Slot>
              <Slot $w={8}><Sep /></Slot>
              <Slot $w={22}><MergeIcon /></Slot>
              <span>Объединить и поместить в центре</span>
              <Slot $w={14}><Caret /></Slot>
            </Tools>
          </GroupBody>
          <GroupLabel $launcher>Выравнивание<Launcher /></GroupLabel>
        </Group>

        <Group $w={142}>
          <GroupBody $column $pl={5} $pt={10} $gap={7}>
            <Tools><Combo $w={133}>Общий<Caret /></Combo></Tools>
            <Tools>
              <Slot $w={26}><CurrencyIcon /></Slot>
              <Slot $w={8}><Caret /></Slot>
              <Slot $w={24}><NumGlyph $size={12}>%</NumGlyph></Slot>
              <Slot $w={22}><NumGlyph $size={11}>000</NumGlyph></Slot>
              <Slot $w={10}><Sep /></Slot>
              <Slot $w={21}><DecimalIcon /></Slot>
              <Slot $w={22}><DecimalIcon dec /></Slot>
            </Tools>
          </GroupBody>
          <GroupLabel $launcher>Число<Launcher /></GroupLabel>
        </Group>

        <Group $w={250}>
          <GroupBody $pl={5}>
            <LargeButton $w={106}>
              <LargeIcon><CondFormatIcon /></LargeIcon>
              <LargeText>
                <TextLine>Условное</TextLine>
                <TextLine>форматирование<Caret /></TextLine>
              </LargeText>
            </LargeButton>
            <LargeButton $w={94}>
              <LargeIcon><FormatTableIcon /></LargeIcon>
              <LargeText>
                <TextLine>Форматировать</TextLine>
                <TextLine>как таблицу<Caret /></TextLine>
              </LargeText>
            </LargeButton>
            <LargeButton $w={38}>
              <LargeIcon><CellStylesIcon /></LargeIcon>
              <LargeText>
                <TextLine>Стили</TextLine>
                <TextLine>ячеек<Caret /></TextLine>
              </LargeText>
            </LargeButton>
          </GroupBody>
          <GroupLabel>Стили</GroupLabel>
        </Group>

        <Group $w={153}>
          <GroupBody $pl={5}>
            <LargeButton $w={52}>
              <LargeIcon><InsertCellsIcon /></LargeIcon>
              <LargeText>
                <TextLine>Вставить</TextLine>
                <TextLine><Caret /></TextLine>
              </LargeText>
            </LargeButton>
            <LargeButton $w={48}>
              <LargeIcon><DeleteCellsIcon /></LargeIcon>
              <LargeText>
                <TextLine>Удалить</TextLine>
                <TextLine><Caret /></TextLine>
              </LargeText>
            </LargeButton>
            <LargeButton $w={42}>
              <LargeIcon><FormatCellsIcon /></LargeIcon>
              <LargeText>
                <TextLine>Формат</TextLine>
                <TextLine><Caret /></TextLine>
              </LargeText>
            </LargeButton>
          </GroupBody>
          <GroupLabel>Ячейки</GroupLabel>
        </Group>

        <Group $w={235}>
          <GroupBody>
            <SmallStack $w={91} $ml={8}>
              <SmallRow><Slot $w={20}><SigmaIcon /></Slot>Автосумма<Slot $w={14}><Caret /></Slot></SmallRow>
              <SmallRow><Slot $w={20}><FillIcon /></Slot>Заполнить<Slot $w={12}><Caret /></Slot></SmallRow>
              <SmallRow><Slot $w={20}><EraserIcon /></Slot>Очистить<Slot $w={12}><Caret /></Slot></SmallRow>
            </SmallStack>
            <LargeButton $w={68}>
              <LargeIcon><SortIcon /></LargeIcon>
              <LargeText>
                <TextLine>Сортировка</TextLine>
                <TextLine>и фильтр<Caret /></TextLine>
              </LargeText>
            </LargeButton>
            <LargeButton $w={66}>
              <LargeIcon><FindIcon /></LargeIcon>
              <LargeText>
                <TextLine>Найти и</TextLine>
                <TextLine>выделить<Caret /></TextLine>
              </LargeText>
            </LargeButton>
          </GroupBody>
          <GroupLabel>Редактирование</GroupLabel>
        </Group>
      </Ribbon>

      <FormulaStrip>
        <NameBox>E3<NameCaret /></NameBox>
        <FxZone><Grip /><FxMark>fx</FxMark></FxZone>
        <FormulaInput>= ЕСЛИ(D3= "информационными процессами";"верно";"неправильно")</FormulaInput>
        <ExpandButton><ChevronDown /></ExpandButton>
      </FormulaStrip>

      <SheetRow>
        <SheetWrap>
          <Grid $cols={gridCols} $rows={gridRows}>
            <Corner><CornerMark /></Corner>
            {colNames.map((c, i) => (
              <ColHead key={`h${i}`} $on={c === "E"}>{c}</ColHead>
            ))}
            {rowDefs.map(([n]) => (
              <React.Fragment key={n}>
                <RowHead $on={n === 3} $hiddenNext={n === 6}>{n}</RowHead>
                {colNames.map((c, i) => renderCell(c || `x${i}`, n))}
              </React.Fragment>
            ))}
          </Grid>
          <FloatingNote>Для перехода  к резкльтату нажмите здесь</FloatingNote>
          <FloatingArrow width="14" height="38" viewBox="0 0 14 38">
            <path d="M7 0v37M1 28l6 9 6-9" fill="none" stroke="#b477cc" />
          </FloatingArrow>
        </SheetWrap>
        <VScroll>
          <SplitBox />
          <VArrow><svg width="10" height="6" viewBox="0 0 10 6"><path d="M0 6h10L5 0z" fill="#444" /></svg></VArrow>
          <VTrack><VThumb /></VTrack>
          <VArrow><svg width="10" height="6" viewBox="0 0 10 6"><path d="M0 0h10L5 6z" fill="#444" /></svg></VArrow>
        </VScroll>
      </SheetRow>

      <BottomBar>
        <NavArrows>
          <Slot $w={14}><FirstIcon /></Slot>
          <Slot $w={13}><TriLeft /></Slot>
          <Slot $w={13}><TriRight /></Slot>
          <Slot $w={14}><LastIcon /></Slot>
        </NavArrows>
        <SheetTab $w={81}>титульный</SheetTab>
        <SheetTab $w={46} $active>тест</SheetTab>
        <SheetTab $w={79}>результат</SheetTab>
        <SheetTab $w={40}><NewSheetIcon /></SheetTab>
        <TabSpacer />
        <HScroll>
          <SplitterBar />
          <HThumb><GripLines /></HThumb>
          <Slot $w={37} />
          <Slot $w={14}><TriRight c="#555" /></Slot>
          <SplitterBar />
        </HScroll>
        <Slot $w={19} />
      </BottomBar>

      <StatusBar>
        <StatusText>Готово</StatusText>
        <StatusRight>
          <ViewBtn $on><NormalViewIcon /></ViewBtn>
          <ViewBtn><LayoutViewIcon /></ViewBtn>
          <ViewBtn><PageViewIcon /></ViewBtn>
          <Zoom>100%</Zoom>
          <ZoomCircle>−</ZoomCircle>
          <SliderTrack><SliderThumb><ThumbIcon /></SliderThumb></SliderTrack>
          <ZoomCircle>+</ZoomCircle>
        </StatusRight>
      </StatusBar>

      <Taskbar>
        <TaskButton $w={50}><WinFlag /><StartLabel>Пуск</StartLabel></TaskButton>
        <TaskButton $w={31} $ml={10}><ChromeIcon /></TaskButton>
        <TaskButton $w={29} $ml={3}><OfficeTile letter="W" fg="#1f5fb5" bg="#e8f0fa" /></TaskButton>
        <TaskButton $w={3} />
        <TaskButton $w={31} $ml={2} $pressed><OfficeTile letter="X" fg="#1f7b3c" bg="#fff" /></TaskButton>
        <TaskButton $w={31} $ml={4} $flat><OfficeTile letter="P" fg="#d24726" bg="#fbe9e2" /></TaskButton>
        <TaskButton $w={31} $ml={3} $flat><MediaIcon /></TaskButton>
        <TaskButton $w={31} $ml={2}><FolderIcon /></TaskButton>
        <TaskSpacer />
        <LangLabel>EN</LangLabel>
        <TaskDivider />
        <Tray>
          <Slot $w={14}><ChevronsTray /></Slot>
          <Slot $w={30}><KasperskyIcon /></Slot>
          <Slot $w={19}><SignalIcon /></Slot>
          <Slot $w={29}><SpeakerIcon /></Slot>
          <Clock>10:21</Clock>
          <Slot $w={20}><DesktopIcon /></Slot>
        </Tray>
      </Taskbar>
    </Window>
  );
};

export default App;
